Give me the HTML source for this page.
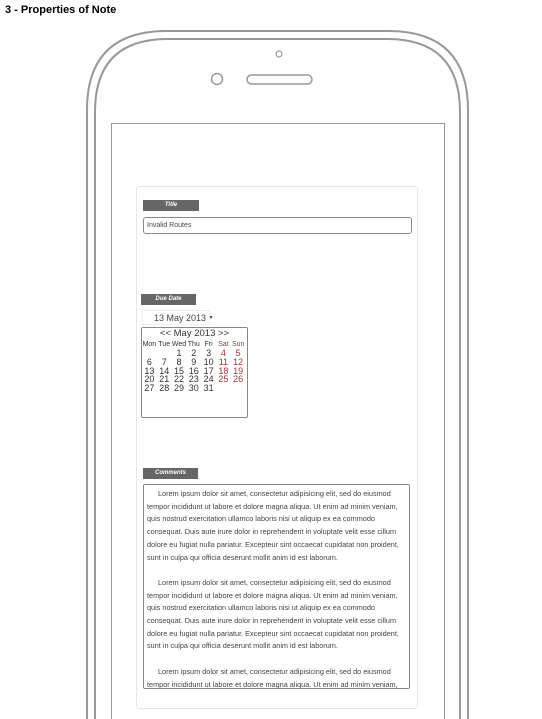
<!DOCTYPE html>
<html><head><style>
body{margin:0;width:542px;height:719px;background:#fff;position:relative;overflow:hidden;font-family:"Liberation Sans",sans-serif}
.a{position:absolute}
.lbl{position:absolute;background:#666;color:#fff;font-size:6px;font-style:italic;font-weight:bold;text-align:center;height:11px;line-height:11px}
.txt{font-size:7.3px;color:#444;line-height:12.7px}
.cal{font-size:9px;color:#333;line-height:8.8px}
.cal span{display:inline-block;width:14.8px;text-align:center}
.r{color:#a33}
</style></head><body>
<div class="a" style="left:5px;top:4px;font-size:11px;font-weight:bold">3 - Properties of Note</div>
<svg class="a" style="left:0;top:0" width="542" height="719">
<path d="M87 719 V110 Q87 32 165 31 H390 Q468 32 468 110 V719" fill="none" stroke="#999" stroke-width="2"/>
<path d="M95 719 V112 Q95 39 168 39 H387 Q460 39 460 112 V719" fill="none" stroke="#999" stroke-width="2"/>
<circle cx="279" cy="54" r="3" fill="none" stroke="#999" stroke-width="1.2"/>
<circle cx="217" cy="79" r="5.5" fill="none" stroke="#999" stroke-width="1.5"/>
<rect x="247" y="75" width="65" height="9" rx="4.5" fill="none" stroke="#999" stroke-width="1.5"/>
<rect x="111.5" y="123.5" width="333" height="600" fill="none" stroke="#999"/>
</svg>
<div class="a" style="left:136px;top:186px;width:280px;height:521px;border:1px solid #e6e6e6;border-radius:3px"></div>
<div class="lbl" style="left:143px;top:200px;width:56px">Title</div>
<div class="a txt" style="left:143px;top:217px;width:264px;height:15px;border:1px solid #888;border-radius:3px;padding-left:3px;line-height:15px;font-size:7px">Invalid Routes</div>
<div class="lbl" style="left:141px;top:294px;width:55px">Due Date</div>
<div class="a" style="left:142px;top:310px;width:68px;height:15px;border:1px solid #eee;font-size:9px;color:#444;line-height:15px;padding-left:11px;box-sizing:border-box;white-space:nowrap">13 May 2013 <span style="font-size:5px;vertical-align:middle">▼</span></div>
<div class="a cal" style="left:141px;top:327px;width:105px;height:89px;border:1px solid #888;border-radius:2px;white-space:nowrap">
<div style="text-align:center;font-size:9.5px;line-height:12px">&lt;&lt; May 2013 &gt;&gt;</div>
<div style="font-size:7px;line-height:9px"><span>Mon</span><span>Tue</span><span>Wed</span><span>Thu</span><span>Fri</span><span class="r">Sat</span><span class="r">Sun</span></div>
<div><span></span><span></span><span>1</span><span>2</span><span>3</span><span class="r">4</span><span class="r">5</span></div>
<div><span>6</span><span>7</span><span>8</span><span>9</span><span>10</span><span class="r">11</span><span class="r">12</span></div>
<div><span>13</span><span>14</span><span>15</span><span>16</span><span>17</span><span class="r">18</span><span class="r">19</span></div>
<div><span>20</span><span>21</span><span>22</span><span>23</span><span>24</span><span class="r">25</span><span class="r">26</span></div>
<div><span>27</span><span>28</span><span>29</span><span>30</span><span>31</span></div>
</div>
<div class="lbl" style="left:143px;top:468px;width:55px">Comments</div>
<div class="a txt" style="left:143px;top:484px;width:260px;height:198px;border:1px solid #888;border-radius:2px;padding:3px 2px 2px 3px;overflow:hidden">
<div style="text-indent:11px">Lorem ipsum dolor sit amet, consectetur adipisicing elit, sed do eiusmod tempor incididunt ut labore et dolore magna aliqua. Ut enim ad minim veniam, quis nostrud exercitation ullamco laboris nisi ut aliquip ex ea commodo consequat. Duis aute irure dolor in reprehenderit in voluptate velit esse cillum dolore eu fugiat nulla pariatur. Excepteur sint occaecat cupidatat non proident, sunt in culpa qui officia deserunt mollit anim id est laborum.</div><br>
<div style="text-indent:11px">Lorem ipsum dolor sit amet, consectetur adipisicing elit, sed do eiusmod tempor incididunt ut labore et dolore magna aliqua. Ut enim ad minim veniam, quis nostrud exercitation ullamco laboris nisi ut aliquip ex ea commodo consequat. Duis aute irure dolor in reprehenderit in voluptate velit esse cillum dolore eu fugiat nulla pariatur. Excepteur sint occaecat cupidatat non proident, sunt in culpa qui officia deserunt mollit anim id est laborum.</div><br>
<div style="text-indent:11px">Lorem ipsum dolor sit amet, consectetur adipisicing elit, sed do eiusmod tempor incididunt ut labore et dolore magna aliqua. Ut enim ad minim veniam,</div>
</div>
</body></html>
